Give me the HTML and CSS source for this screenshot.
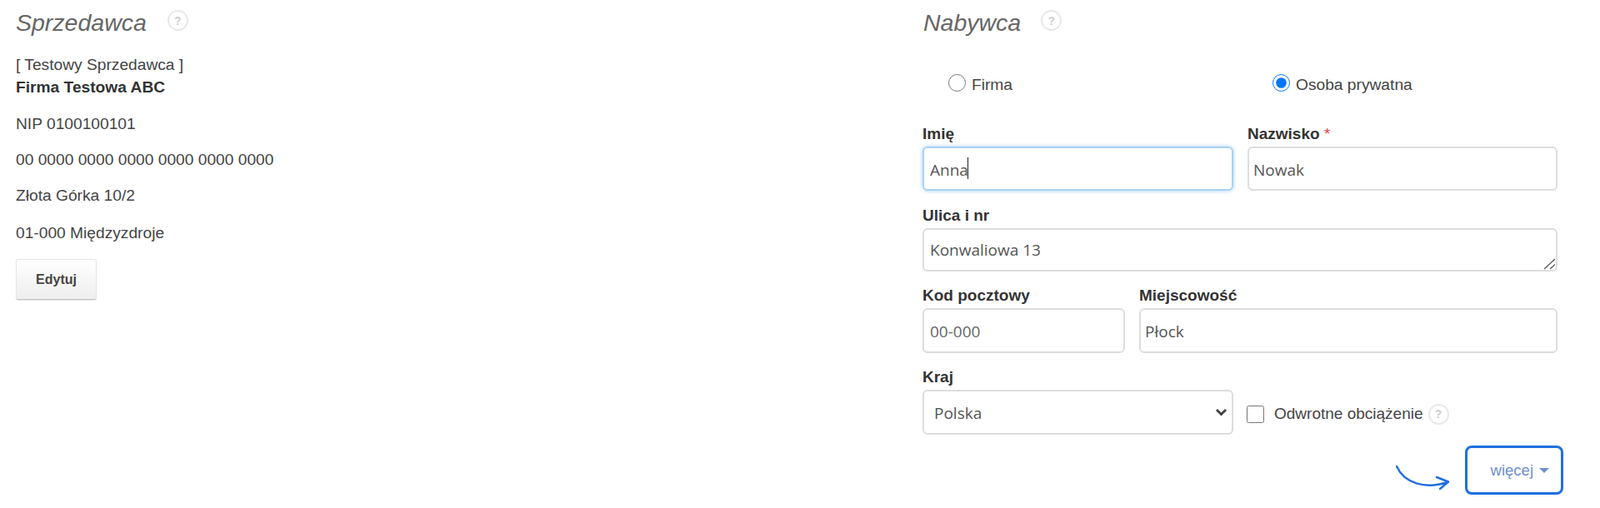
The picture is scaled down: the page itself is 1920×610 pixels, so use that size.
FILE: index.html
```html
<!DOCTYPE html>
<html lang="pl">
<head>
  <meta charset="UTF-8">
  <title>Sprzedawca i Nabywca</title>
  <link rel="stylesheet" href="styles.css">
</head>
<body>
  <div class="page">
    <section class="seller">
      <div class="section-head">
        <h2>Sprzedawca</h2>
        <span class="help help-seller">?</span>
      </div>
      <div class="seller-name">[ Testowy Sprzedawca ]</div>
      <p class="company"><strong>Firma Testowa ABC</strong></p>
      <p>NIP 0100100101</p>
      <p>00 0000 0000 0000 0000 0000 0000</p>
      <p class="street">Złota Górka 10/2</p>
      <p class="last">01-000 Międzyzdroje</p>
      <button type="button" class="btn-edit">Edytuj</button>
    </section>

    <section class="buyer">
      <div class="section-head">
        <h2 class="buyer-title">Nabywca</h2>
        <span class="help help-buyer">?</span>
      </div>

      <div class="radio-row">
        <label class="radio"><input type="radio" name="kind"> Firma</label>
        <label class="radio"><input type="radio" name="kind" checked> Osoba prywatna</label>
      </div>

      <div class="form-row row-name">
        <div class="field half">
          <label>Imię</label>
          <div class="input-wrap">
            <input type="text" class="active" value="Anna">
            <span class="caret"></span>
          </div>
        </div>
        <div class="field half">
          <label>Nazwisko <span class="req">*</span></label>
          <input type="text" value="Nowak">
        </div>
      </div>

      <div class="form-row">
        <div class="field wide">
          <label>Ulica i nr</label>
          <div class="input-wrap">
            <textarea>Konwaliowa 13</textarea>
            <svg class="grip" width="15" height="14" viewBox="0 0 15 14">
              <path d="M1 13L14 1M8 13L14 7.500" fill="none" stroke="#555" stroke-width="1.200"/>
            </svg>
          </div>
        </div>
      </div>

      <div class="form-row row-city">
        <div class="field zip">
          <label>Kod pocztowy</label>
          <input type="text" placeholder="00-000">
        </div>
        <div class="field wide">
          <label>Miejscowość</label>
          <input type="text" value="Płock">
        </div>
      </div>

      <div class="form-row">
        <div class="field half">
          <label>Kraj</label>
          <div class="input-wrap">
            <select>
              <option>Polska</option>
            </select>
            <svg class="chevron" width="15" height="10" viewBox="0 0 15 10">
              <path d="M2 2L7.500 7.500L13 2" fill="none" stroke="#444" stroke-width="3"/>
            </svg>
          </div>
        </div>
        <div class="reverse">
          <input type="checkbox">
          <span>Odwrotne obciążenie</span>
          <span class="help">?</span>
        </div>
      </div>

      <div class="more-row">
        <svg class="arrow" width="66" height="32" viewBox="0 0 66 32">
          <path d="M1 2C10 22 35 30 62 21" fill="none" stroke="#1f6fe0" stroke-width="2.5" stroke-linecap="round"/>
          <path d="M49 15L63 20.500L53 29" fill="none" stroke="#1f6fe0" stroke-width="2.500" stroke-linecap="round" stroke-linejoin="round"/>
        </svg>
        <button type="button" class="btn-more">więcej <span class="more-caret"></span></button>
      </div>
    </section>
  </div>
</body>
</html>
```

FILE: styles.css
```css
* {
  box-sizing: border-box;
}

body {
  margin: 0;
  background: #fff;
  color: #444;
  font-family: "Liberation Sans", Arial, sans-serif;
  font-size: 19.2px;
}

.page {
  display: flex;
  height: 610px;
  overflow: hidden;
}

.seller {
  width: 1107px;
  padding-left: 19px;
}

.buyer {
  width: 762px;
}

.section-head {
  display: flex;
  align-items: center;
  height: 52px;
  margin-bottom: 12px;
}

h2 {
  margin: 3px 0 0;
  font-size: 28.5px;
  font-weight: normal;
  font-style: italic;
  color: #666;
}

.buyer-title {
  margin-left: 1px;
}

.help {
  display: inline-flex;
  align-items: center;
  justify-content: center;
  width: 25px;
  height: 25px;
  border: 2px solid #e8e8e8;
  border-radius: 50%;
  color: #cfcfcf;
  font-size: 14px;
  font-weight: bold;
}

.help-seller {
  margin: -3px 0 0 25px;
}

.help-buyer {
  margin: -3px 0 0 24px;
}

.seller-name,
.seller p {
  line-height: 27px;
}

.seller p {
  margin: 0 0 16px;
}

.seller p.company {
  margin-bottom: 17px;
}

.seller p.street {
  margin-bottom: 18px;
}

.seller p.last {
  margin-bottom: 18px;
}

.seller strong {
  color: #333;
}

.btn-edit {
  display: block;
  width: 97px;
  height: 49px;
  padding: 0;
  border: 1px solid #e6e6e6;
  border-bottom-color: #c4c4c4;
  border-radius: 3px;
  background: linear-gradient(#fff, #eee);
  box-shadow: 0 1px 1px rgba(0, 0, 0, 0.12);
  color: #444;
  font-family: inherit;
  font-size: 16px;
  font-weight: bold;
}

.radio-row {
  display: flex;
  height: 83px;
  padding: 23px 0 0 31px;
}

.radio {
  display: flex;
  flex: none;
  align-items: center;
  gap: 7px;
  width: 389px;
  height: 30px;
}

.radio input {
  width: 21px;
  height: 21px;
  margin: -6px 0 0;
}

.form-row {
  display: flex;
  gap: 17px;
  margin-bottom: 15px;
}

.row-name {
  margin-bottom: 16px;
}

.field label {
  display: block;
  height: 26px;
  margin-bottom: 3px;
  line-height: 27px;
  font-size: 19px;
  font-weight: bold;
  color: #333;
}

.half {
  width: 373px;
}

.half + .half {
  width: 372px;
}

.zip {
  width: 243px;
}

.wide {
  flex: 1;
}

.req {
  color: #f3364f;
  font-weight: normal;
}

.input-wrap {
  position: relative;
}

input[type="text"],
textarea,
select {
  display: block;
  width: 100%;
  height: 53px;
  padding: 2px 7px 0;
  border: 2px solid #ddd;
  border-radius: 6px;
  background: #fff;
  color: #555;
  font-family: "Open Sans", "Noto Sans", sans-serif;
  font-size: 19px;
}

.half + .half input,
.row-city .wide input {
  padding-left: 5px;
}

input::placeholder {
  color: #666;
}

textarea {
  height: 52px;
  padding-top: 11px;
  resize: none;
}

select {
  height: 54px;
  padding-left: 12px;
  appearance: none;
}

.row-city input {
  height: 54px;
}

input.active {
  border-color: #a9d2f3;
  box-shadow: 0 0 5px rgba(102, 175, 233, 0.6);
  outline: none;
}

.caret {
  position: absolute;
  left: 54px;
  top: 13px;
  width: 1px;
  height: 26px;
  background: #222;
}

.grip {
  position: absolute;
  right: 2px;
  bottom: 2px;
}

.chevron {
  position: absolute;
  right: 7px;
  top: 22px;
}

.reverse {
  display: flex;
  align-items: center;
  align-self: flex-end;
  height: 54px;
  margin-left: -1px;
  padding-top: 4px;
  font-size: 19px;
}

.reverse input {
  width: 21px;
  height: 21px;
  margin: 0 12px 0 0;
}

.reverse span:not(.help) {
  margin-right: 6px;
}

.more-row {
  display: flex;
  align-items: center;
  justify-content: flex-end;
  margin: -2px -7px 0 0;
}

.arrow {
  margin: 18px 17px 0 0;
}

.btn-more {
  display: flex;
  align-items: center;
  justify-content: flex-end;
  gap: 7px;
  width: 118px;
  height: 59px;
  padding: 0 14px 0 0;
  border: 3px solid #1f6fe0;
  border-radius: 8px;
  background: #fff;
  color: #6d8fd2;
  font-family: inherit;
  font-size: 18.5px;
}

.more-caret {
  width: 0;
  height: 0;
  border-left: 6px solid transparent;
  border-right: 6px solid transparent;
  border-top: 6px solid #6d8fd2;
}
```
